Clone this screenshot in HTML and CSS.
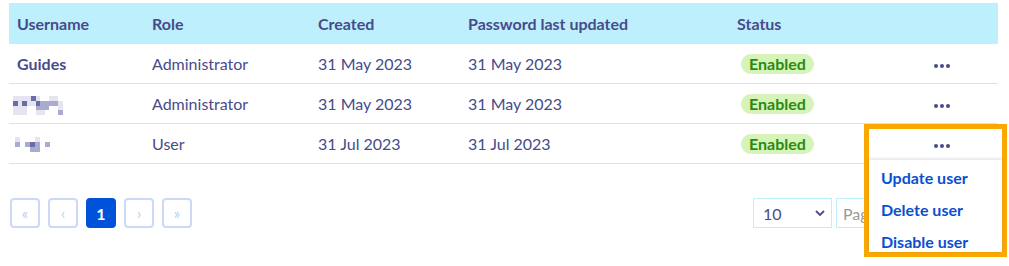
FILE: index.html
```html
<!DOCTYPE html>
<html lang="en">
<head>
    <meta charset="UTF-8">
    <title>Users</title>
    <link rel="stylesheet" href="styles.css">
</head>
<body>
    <div class="page">
        <table class="users">
            <colgroup>
                <col style="width: 135px">
                <col style="width: 166px">
                <col style="width: 150px">
                <col style="width: 269px">
                <col style="width: 157px">
                <col>
            </colgroup>
            <thead>
                <tr>
                    <th>Username</th>
                    <th>Role</th>
                    <th>Created</th>
                    <th>Password last updated</th>
                    <th>Status</th>
                    <th></th>
                </tr>
            </thead>
            <tbody>
                <tr>
                    <td class="name">Guides</td>
                    <td>Administrator</td>
                    <td>31 May 2023</td>
                    <td>31 May 2023</td>
                    <td><span class="badge">Enabled</span></td>
                    <td class="actions">
                        <svg class="dots" width="16" height="4" viewBox="0 0 16 4"><circle cx="2" cy="2" r="2"/><circle cx="8" cy="2" r="2"/><circle cx="14" cy="2" r="2"/></svg>
                    </td>
                </tr>
                <tr>
                    <!-- redacted username -->
                    <td>
                        <span class="blur blur-a">
                            <i class="p1"></i><i class="p1"></i><i class="p1"></i><i class="p1"></i><i class="p3"></i><i class="p1"></i><i class="p0"></i><i class="p0"></i><i class="p1"></i><i class="p1"></i><i class="p0"></i>
                            <i class="p3"></i><i class="p1"></i><i class="p3"></i><i class="p1"></i><i class="p1"></i><i class="p3"></i><i class="p2"></i><i class="p2"></i><i class="p2"></i><i class="p2"></i><i class="p1"></i>
                            <i class="p1"></i><i class="p1"></i><i class="p1"></i><i class="p0"></i><i class="p0"></i><i class="p2"></i><i class="p2"></i><i class="p2"></i><i class="p0"></i><i class="p0"></i><i class="p1"></i>
                            <i class="p1"></i><i class="p1"></i><i class="p1"></i><i class="p0"></i><i class="p0"></i><i class="p1"></i><i class="p1"></i><i class="p0"></i><i class="p0"></i><i class="p0"></i><i class="p2"></i>
                        </span>
                    </td>
                    <td>Administrator</td>
                    <td>31 May 2023</td>
                    <td>31 May 2023</td>
                    <td><span class="badge">Enabled</span></td>
                    <td class="actions">
                        <svg class="dots" width="16" height="4" viewBox="0 0 16 4"><circle cx="2" cy="2" r="2"/><circle cx="8" cy="2" r="2"/><circle cx="14" cy="2" r="2"/></svg>
                    </td>
                </tr>
                <tr>
                    <td>
                        <span class="blur blur-b">
                            <i class="p1"></i><i class="p0"></i><i class="p0"></i><i class="p0"></i><i class="p1"></i><i class="p0"></i><i class="p0"></i>
                            <i class="p2"></i><i class="p0"></i><i class="p2"></i><i class="p3"></i><i class="p2"></i><i class="p0"></i><i class="p2"></i>
                            <i class="p0"></i><i class="p0"></i><i class="p0"></i><i class="p2"></i><i class="p2"></i><i class="p0"></i><i class="p0"></i>
                        </span>
                    </td>
                    <td>User</td>
                    <td>31 Jul 2023</td>
                    <td>31 Jul 2023</td>
                    <td><span class="badge">Enabled</span></td>
                    <td class="actions">
                        <svg class="dots" width="16" height="4" viewBox="0 0 16 4"><circle cx="2" cy="2" r="2"/><circle cx="8" cy="2" r="2"/><circle cx="14" cy="2" r="2"/></svg>
                        <!-- open row menu, highlighted -->
                        <div class="highlight">
                            <ul class="menu">
                                <li>Update user</li>
                                <li>Delete user</li>
                                <li>Disable user</li>
                            </ul>
                        </div>
                    </td>
                </tr>
            </tbody>
        </table>

        <div class="pager">
            <div class="pages">
                <button class="page-btn">«</button>
                <button class="page-btn">‹</button>
                <button class="page-btn active">1</button>
                <button class="page-btn">›</button>
                <button class="page-btn">»</button>
            </div>
            <div class="page-size">
                <div class="select">
                    <span>10</span>
                    <svg width="10" height="6" viewBox="0 0 10 6"><path d="M1 1l4 4 4-4" fill="none" stroke="#474b8a" stroke-width="1.8"/></svg>
                </div>
                <input class="goto" type="text" placeholder="Page">
            </div>
        </div>
    </div>
</body>
</html>
```

FILE: styles.css
```css
/* Base */
body, html {
    margin: 0;
    padding: 0;
    height: 100%;
    background: #fff;
    font-family: Lato, "Open Sans", sans-serif;
    color: #474b8a;
}

.page {
    min-height: 266px;
    box-sizing: border-box;
    padding: 3px 11px 0 9px;
}

/* Users table */
.users {
    width: 100%;
    border-collapse: collapse;
    table-layout: fixed;
    font-size: 16px;
}

.users th {
    background: #bdeffd;
    height: 41px;
    padding: 0 8px;
    text-align: left;
    font-weight: 700;
}

.users td {
    height: 39px;
    padding: 0 8px;
    border-bottom: 1px solid #bdeffd;
    white-space: nowrap;
}

.users td.name {
    font-weight: 700;
}

.badge {
    display: inline-block;
    margin-left: 4px;
    padding: 0 8px;
    height: 20px;
    line-height: 20px;
    border-radius: 10px;
    background: #d6f3b9;
    color: #2c8a10;
    font-weight: 700;
}

.actions {
    position: relative;
    text-align: center;
}

.dots {
    display: inline-block;
    vertical-align: middle;
    fill: #474b8a;
}

/* Redacted names */
.blur {
    display: grid;
    grid-auto-rows: 5px;
    margin-left: -4px;
}

.blur i {
    display: block;
}

.blur-a {
    grid-template-columns: repeat(11, 4.5px);
    grid-auto-rows: 4.75px;
    margin-top: 4px;
}

.blur-b {
    grid-template-columns: repeat(7, 5px);
    margin-left: -2px;
    margin-top: 2px;
}

.p0 { background: #fff; }
.p1 { background: #e4e5f1; }
.p2 { background: #a9acd0; }
.p3 { background: #6a6ea5; }

/* Row menu */
.highlight {
    position: absolute;
    top: 0;
    left: -22px;
    width: 133px;
    height: 123px;
    border: 5px solid #f9a800;
    z-index: 2;
}

.menu {
    position: absolute;
    left: 0;
    right: 0;
    bottom: 0;
    top: 31px;
    margin: 0;
    padding: 2px 0 0;
    list-style: none;
    background: #fff;
    box-shadow: 0 -1px 3px rgba(120, 120, 150, 0.25);
    text-align: left;
}

.menu li {
    height: 32px;
    line-height: 32px;
    padding-left: 12px;
    color: #0b4fd1;
    font-weight: 700;
}

/* Pagination */
.pager {
    display: flex;
    justify-content: space-between;
    align-items: center;
    margin-top: 34px;
    padding-left: 1px;
}

.pages {
    display: flex;
    gap: 8px;
}

.page-btn {
    width: 30px;
    height: 30px;
    padding: 0;
    border: 2px solid #ccdaf7;
    border-radius: 4px;
    background: #fff;
    color: #b9caf2;
    font-family: Lato, sans-serif;
    font-size: 15px;
}

.page-btn.active {
    background: #0052d9;
    border-color: #0052d9;
    color: #fff;
    font-weight: 700;
    font-size: 16px;
}

.page-size {
    display: flex;
    gap: 4px;
}

.select {
    width: 79px;
    height: 30px;
    box-sizing: border-box;
    border: 1px solid #bdeffd;
    display: flex;
    justify-content: space-between;
    align-items: center;
    padding: 0 6px 0 9px;
    font-size: 16px;
}

.goto {
    width: 162px;
    height: 30px;
    box-sizing: border-box;
    border: 1px solid #bdeffd;
    padding: 0 6px;
    font-family: Lato, sans-serif;
    font-size: 16px;
}

.goto::placeholder {
    color: #999;
}
```
